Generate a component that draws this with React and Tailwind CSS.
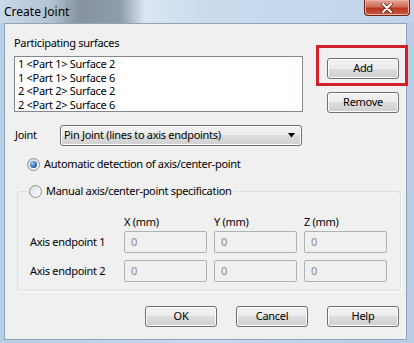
import { useState } from "react";

const font = { fontFamily: '"Noto Sans", "DejaVu Sans", sans-serif' };

const btn =
  "flex h-[21px] w-[72px] items-center justify-center rounded-[3px] border border-[#707070] bg-[linear-gradient(#f2f2f2_0%,#ebebeb_50%,#dddddd_50%,#cfcfcf_100%)] text-[11px] text-black shadow-[inset_0_0_0_1px_#fcfcfc]";

const inputCls =
  "flex h-[22px] w-[83px] items-center rounded-[2px] border border-[#adb2b5] bg-[#f0f0f0] pl-[6px] text-[11px] text-[#8a8a8a]";

function Radio({ checked }) {
  return (
    <span className="flex h-[13px] w-[13px] items-center justify-center rounded-full border border-[#8e8f8f] bg-[linear-gradient(135deg,#d6d6d6,#ffffff)]">
      {checked ? (
        <span className="h-[7px] w-[7px] rounded-full bg-[radial-gradient(circle_at_35%_35%,#9fd2f6,#2a6ab0_60%,#14407a)]" />
      ) : (
        <span className="h-[9px] w-[9px] rounded-full bg-[linear-gradient(135deg,#e2e2e2,#fbfbfb)]" />
      )}
    </span>
  );
}

export default function App() {
  const [auto, setAuto] = useState(true);
  const items = [
    "1 <Part 1> Surface 2",
    "1 <Part 1> Surface 6",
    "2 <Part 2> Surface 2",
    "2 <Part 2> Surface 6",
  ];

  return (
    <div
      className="relative flex h-[343px] w-[414px] flex-col overflow-hidden bg-[linear-gradient(90deg,#b9cfe6,#c6d9ed_50%,#b7cde5)] tracking-[-0.3px]"
      style={font}
    >
      {/* title bar */}
      <div className="relative flex h-[23px] items-center bg-[linear-gradient(90deg,#c7d9ec_0px,#b4c3d3_50px,#86929f_80px,#8f9ca9_120px,#dce6f1_145px,#cbdcee_200px,#bfd4ea_414px)] pl-[4px]">
        <span className="text-[12px] tracking-normal text-black">Create Joint</span>
        <div className="absolute right-[4px] top-0 flex h-[16px] w-[46px] items-center justify-center rounded-b-[4px] border border-t-0 border-[#6e2418] bg-[linear-gradient(#e3a596_0%,#d26d59_45%,#b8351f_55%,#c9573f_100%)] shadow-[inset_0_0_0_1px_#eab0a3]">
          <svg width="12" height="10" viewBox="0 0 12 10">
            <path d="M2 1 L10 9 M10 1 L2 9" stroke="#5a1a10" strokeWidth="3.4" strokeLinecap="round" />
            <path d="M2 1 L10 9 M10 1 L2 9" stroke="#ffffff" strokeWidth="2" strokeLinecap="round" />
          </svg>
        </div>
      </div>

      {/* client */}
      <div className="ml-[4px] h-[317px] w-[403px] border border-[#8fa3b9] bg-[#f0f0f0] text-[11px] text-black">
        <div className="relative flex pl-[9px] pt-[12px]">
          <div className="flex flex-col">
            <span className="h-[14px] leading-[14px]">Participating surfaces</span>
            <div className="mt-[6px] h-[56px] w-[289px] overflow-hidden border border-[#828790] bg-white pl-[3px] leading-[13.5px]">
              {items.map((item) => (
                <div key={item}>{item}</div>
              ))}
            </div>
          </div>
          <div className="ml-[24px] flex flex-col pt-[22px]">
            <button className={`${btn} border-[#3c7fb1] shadow-[inset_0_0_0_1px_#a8e0fb]`}>Add</button>
            <button className={`${btn} mt-[13px]`}>Remove</button>
          </div>
          <div className="absolute left-[311px] top-[21px] h-[41px] w-[92px] border-[3px] border-[#d0202a]" />
        </div>

        <div className="mt-[12px] flex items-center pl-[10px]">
          <span className="w-[45px]">Joint</span>
          <div className="flex h-[21px] w-[242px] items-center justify-between rounded-[3px] border border-[#707070] bg-[linear-gradient(#f2f2f2_0%,#ebebeb_50%,#dddddd_50%,#cfcfcf_100%)] pl-[3px] pr-[5px] shadow-[inset_0_0_0_1px_#fcfcfc]">
            <span>Pin Joint (lines to axis endpoints)</span>
            <svg width="8" height="5" viewBox="0 0 8 5">
              <path d="M0 0 H7 L3.5 4.5 Z" fill="#000" />
            </svg>
          </div>
        </div>

        <div
          className="mt-[11px] flex h-[14px] items-center gap-[4px] pl-[22px]"
          onClick={() => setAuto(true)}
        >
          <Radio checked={auto} />
          <span>Automatic detection of axis/center-point</span>
        </div>

        <fieldset className="ml-[12px] mt-[13px] h-[107px] w-[384px] rounded-[3px] border border-[#d5dfe5] shadow-[1px_1px_0_#fff]">
          <legend
            className="ml-[9px] flex h-[14px] items-center gap-[4px] px-[2px]"
            onClick={() => setAuto(false)}
          >
            <Radio checked={!auto} />
            <span>Manual axis/center-point specification</span>
          </legend>
          <div className="mt-[17px] grid grid-cols-[87px_83px_83px_83px] gap-x-[7px] pl-[12px]">
            <span />
            <span className="h-[16px] leading-[14px]">X (mm)</span>
            <span className="h-[16px] leading-[14px]">Y (mm)</span>
            <span className="h-[16px] leading-[14px]">Z (mm)</span>

            <span className="flex items-center">Axis endpoint 1</span>
            <div className={inputCls}>0</div>
            <div className={inputCls}>0</div>
            <div className={inputCls}>0</div>

            <span className="mt-[7px] flex items-center">Axis endpoint 2</span>
            <div className={`${inputCls} mt-[7px]`}>0</div>
            <div className={`${inputCls} mt-[7px]`}>0</div>
            <div className={`${inputCls} mt-[7px]`}>0</div>
          </div>
        </fieldset>

        <div className="mt-[15px] flex justify-end gap-[19px] pr-[7px]">
          <button className={btn}>OK</button>
          <button className={btn}>Cancel</button>
          <button className={btn}>Help</button>
        </div>
      </div>
    </div>
  );
}
